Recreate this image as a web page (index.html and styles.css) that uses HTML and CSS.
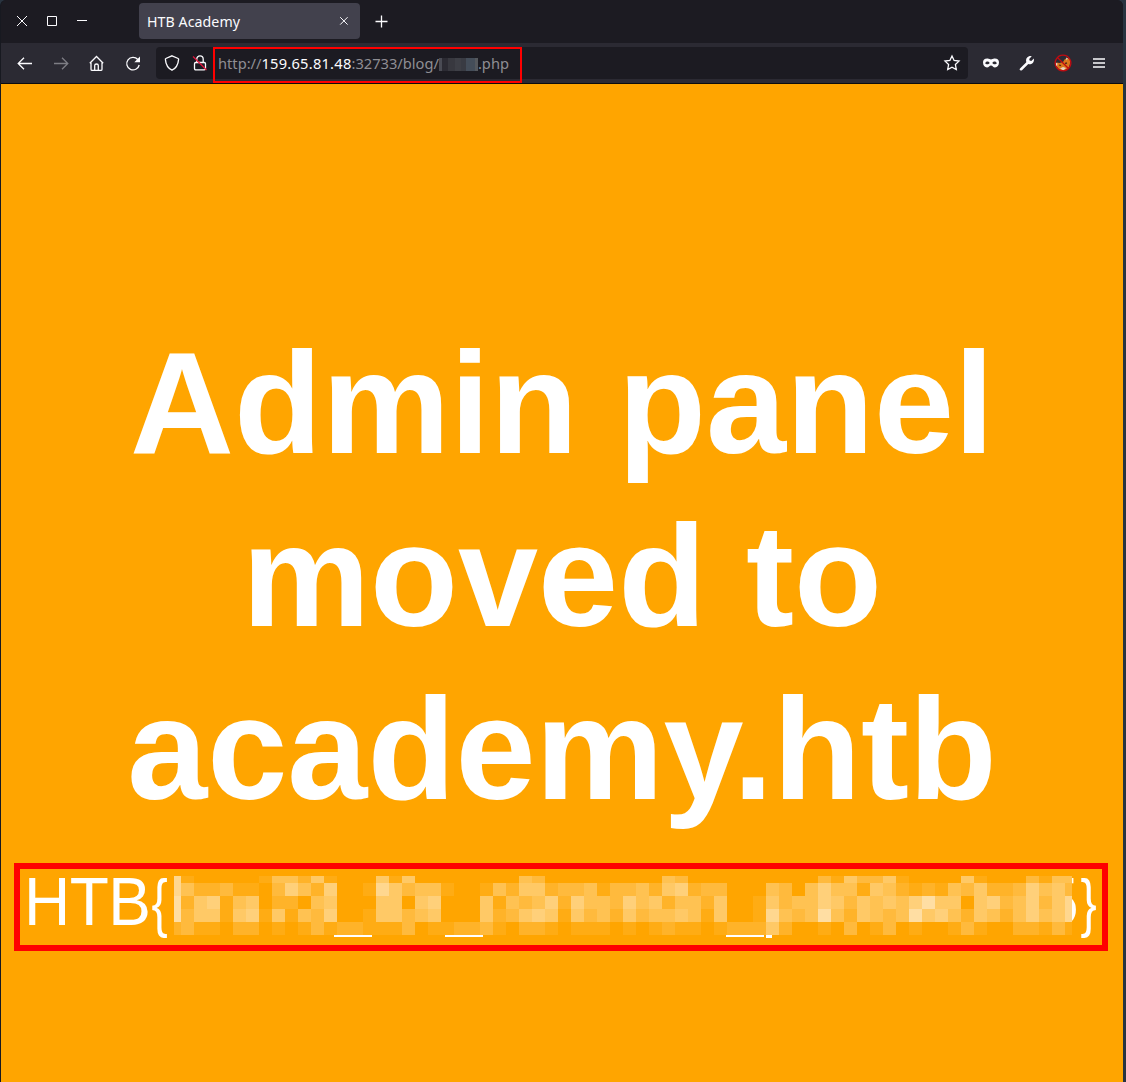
FILE: index.html
```html
<!DOCTYPE html>
<html lang="en">
<head>
<meta charset="utf-8">
<title>HTB Academy</title>
<link rel="stylesheet" href="styles.css">
</head>
<body>
<div class="window">
  <header class="titlebar">
    <div class="controls">
      <svg width="12" height="12" viewBox="0 0 12 12"><path d="M1 1l10 10M11 1L1 11"/></svg>
      <svg width="12" height="12" viewBox="0 0 12 12"><path d="M1.5 1.5h9v9h-9z"/></svg>
      <svg width="12" height="12" viewBox="0 0 12 12"><path d="M1 5.5h10"/></svg>
    </div>
    <div class="tab"><span>HTB Academy</span>
      <svg width="10" height="10" viewBox="0 0 10 10"><path d="M1.200 1.200l7.400 7.400M8.600 1.200l-7.400 7.400"/></svg>
    </div>
    <svg class="new-tab" width="13" height="13" viewBox="0 0 13 13"><path d="M6.500 .5v12M.5 6.500h12"/></svg>
  </header>
  <nav class="toolbar">
    <div class="nav-buttons">
      <svg width="16" height="16" viewBox="0 0 16 16"><path d="M15 8.500H1.500M7 2.700L1.200 8.500L7 14.300"/></svg>
      <svg class="disabled" width="16" height="16" viewBox="0 0 16 16"><path d="M1 8.500h13.500M9 2.700L14.800 8.500L9 14.300"/></svg>
      <svg width="16" height="16" viewBox="0 0 16 16"><path d="M.8 8.200L7.500 1.500l6.700 6.700M2 7v7.200q0 1.200 1.200 1.200h8.600q1.200 0 1.200-1.200V7M5.700 15.200v-4.700q0-1.500 1.800-1.500t1.800 1.500v4.700"/></svg>
      <svg width="16" height="16" viewBox="0 0 16 16"><path d="M12.800 4.500A6.300 6.300 0 1 0 14.200 10"/><path class="solid" d="M15 1.500v5.700H9.300z"/></svg>
    </div>
    <div class="urlbar">
      <svg class="shield" width="16" height="16" viewBox="0 0 16 16"><path d="M8 .8L14.200 3.500Q14.700 3.700 14.600 4.400C14.200 9.400 12 13.300 8 15.200C4 13.300 1.800 9.400 1.400 4.400Q1.300 3.700 1.800 3.500z"/></svg>
      <svg class="lock" width="16" height="16" viewBox="0 0 16 16"><path d="M4.800 7V4a3.200 3.200 0 0 1 6.400 0v3M3.800 7.500h8.400q1.300 0 1.300 1.300v4.700q0 1.300-1.300 1.300H3.800q-1.300 0-1.300-1.300V8.800q0-1.300 1.300-1.300z"/><path class="slash" d="M1 1.500l13.500 13.500"/></svg>
      <div class="url"><span>http://<b>159.65.81.48</b>:32733/blog/</span><span class="smudge"></span><span>.php</span></div>
      <svg class="star" width="16" height="16" viewBox="0 0 16 16"><path d="M8 1l2.100 4.500 4.900.6-3.600 3.400.9 5L8 12.200 3.700 14.500l.9-5L1 6.100l4.900-.6z"/></svg>
    </div>
    <div class="extensions">
      <svg width="16" height="16" viewBox="0 0 16 16"><path class="solid mask" d="M4.200 3.500C6 3.300 7 4.500 8 4.500s2-1.200 3.800-1C14.500 3.500 16 5 16 7.300c0 3.200-1.700 5.200-4 5.200C10.200 12.500 9.500 10.500 8 10.500s-2.200 2-4 2c-2.300 0-4-2-4-5.200C0 5 1.500 3.500 4.200 3.500zM2.200 8.200c.8 1.500 3.500 1.500 4.500-.2C5.300 6 3 6.200 2.200 8.200zm7.100-.2c1 1.700 3.700 1.700 4.500.2C13 6.200 10.700 6 9.300 8z"/></svg>
      <svg width="16" height="16" viewBox="0 0 16 16"><path class="solid" d="M1 13.500L7.300 7.300C6.500 4.500 7.500 2 10 1.200c1-.3 2-.2 2.700 0L10.200 4l.4 1.600 1.700.4 2.600-2.600c.5 2.600-.7 4.800-2.700 5.500-1 .3-2 .3-2.900 0L3 15.200C1.500 16.200-.1 14.800 1 13.500z"/></svg>
      <svg class="fox" width="18" height="18" viewBox="0 0 18 18"><path class="fur" d="M2.500 8.500l3 .5L9 8l2-3 1.500-.5 3.500 0v5l-1.500 5L10 16.500 5 15.500 2.500 12z"/><path class="cheek" d="M1.500 8.500l2 1-.5 3-1.500-1zM12 3.500l2 1-1.500 2zM6 14.500l3-1.500 3 1-2.500 2.500z"/><path class="eyes" d="M5 11l2 .6M11 9.500l2-.5"/><path class="ban" d="M3.200 3.200l11.600 11.600M9 1.200a7.800 7.800 0 1 0 .01 0z"/></svg>
      <svg width="16" height="16" viewBox="0 0 16 16"><path d="M2 4h12M2 8h12M2 12h12"/></svg>
    </div>
    <div class="url-highlight"></div>
  </nav>
  <main class="page">
    <h1>Admin panel<br>moved to<br>academy.htb</h1>
    <div class="flag">
      <span>HTB<b class="open">{</b></span>
      <span>5<b class="close">}</b></span>
      <div class="mosaic" id="mosaic"></div>
      <i class="rule first"></i><i class="rule second"></i><i class="rule third"></i><i class="stem"></i>
    </div>
  </main>
</div>
<script src="mosaic.js"></script>
</body>
</html>
```
FILE: styles.css
```css
* { box-sizing: border-box; }
body { margin: 0; background: #293440; font-family: "Noto Sans", sans-serif; }
.window { width: 1123px; height: 1082px; border-left: 1px solid #171920; display: flex; flex-direction: column; overflow: hidden; border-radius: 6px 6px 0 0; background: #1c1b22; }
svg { display: block; flex: none; fill: none; stroke: #fbfbfe; stroke-width: 1.3; overflow: visible; }
.solid { fill: #fbfbfe; stroke: none; }
.mask { fill-rule: evenodd; }
.titlebar { height: 43px; display: flex; align-items: center; background: #1c1b22; }
.controls { width: 138px; padding-left: 15px; margin-top: -2px; display: flex; gap: 18px; }
.controls svg, .tab svg { stroke-width: 1; }
.tab { width: 221px; height: 36px; margin-top: -1px; padding: 0 11px 0 8px; background: #42414d; border-radius: 4px; display: flex; align-items: center; justify-content: space-between; color: #fbfbfe; font-size: 14.2px; letter-spacing: .06px; }
.new-tab { margin-left: 15px; }
.toolbar { height: 41px; position: relative; display: flex; align-items: center; background: #2b2a33; border-bottom: 1px solid #0c0c0d; }
.nav-buttons { width: 155px; padding-left: 16px; display: flex; gap: 20px; }
.disabled { opacity: .4; }
.urlbar { width: 812px; height: 32px; padding: 0 8px; border-radius: 4px; background: #1c1b22; display: flex; align-items: center; }
.lock { margin-left: 12px; }
.slash { stroke: #e1143c; }
.url { flex: 1; margin-left: 10px; display: flex; align-items: center; color: #8f8e94; font-size: 14.67px; white-space: pre; }
.url b { font-weight: 400; color: #fbfbfe; letter-spacing: .23px; }
.smudge { width: 39px; height: 13px; margin-top: 2px; background: linear-gradient(90deg, #4a4b54 0 3px, #2c2b33 3px 9px, #38383f 9px 16px, #3e3f46 16px 22px, #393b43 22px 27px, #444d59 27px 36px, #55585d 36px); }
.extensions { margin-left: 15px; display: flex; align-items: center; gap: 20px; }
.fox { margin: 0 -1px; }
.fur { fill: #d9761c; stroke: none; }
.cheek { fill: #e8d4c0; stroke: none; }
.eyes { stroke: #5a2c16; }
.ban { stroke: #c20a10; }
.url-highlight { position: absolute; left: 212px; top: 4px; width: 309px; height: 36px; border: 2px solid #f00; }
.page { flex: 1; padding: 233px 13px 0; background: #ffa500; color: #fff; font-family: "Liberation Sans", Arial, sans-serif; }
h1 { margin: 0; font-size: 144px; line-height: 173px; text-align: center; }
.flag { position: relative; width: 1094px; height: 88px; margin-top: 27px; border: 6px solid #f00; padding: 0 5px 10px 4px; display: flex; justify-content: space-between; align-items: center; font-size: 64px; line-height: 76px; letter-spacing: -.5px; }
.flag span { transform: scaleY(1.065); }
.flag b { display: inline-block; font-weight: 400; }
.open { transform: scale(.76, .96); transform-origin: 10% 60%; }
.close { transform: scale(.76, .96); transform-origin: 90% 60%; margin-left: -2px; }
.mosaic { position: absolute; left: 154px; top: 7px; display: grid; grid-template-columns: 7px repeat(68, 13px) 7px; grid-template-rows: 7px repeat(4, 13px); background: #ffa500; }
.mosaic i { background: #fff; }
.rule, .stem { position: absolute; top: 66px; height: 1.5px; width: 38px; background: #fff; }
.first { left: 314px; }
.second { left: 425px; }
.third { left: 706px; }
.stem { left: 746px; width: 6px; height: 3px; }
```
FILE: mosaic.js
```js
// Brightness of each block, from 0 (page colour) to 9 (lightest).
const rows = [
  "7100000144251000515000000004300000000043000000000031533510000510003144",
  "7422311036426001753441001425523341334256233000430464415421214352236453",
  "8256145022045000550560005143462644364524425001534465354546855056346357",
  "8355156151436001553450005235651534253445415001743484254348564254246457",
  "2311022010131221113011223102210111010121101222520010301301001310022131"
];
const mosaic = document.getElementById("mosaic");
for (const row of rows) {
  for (const level of row) {
    const block = document.createElement("i");
    block.style.opacity = level * 0.08;
    mosaic.append(block);
  }
}
```
